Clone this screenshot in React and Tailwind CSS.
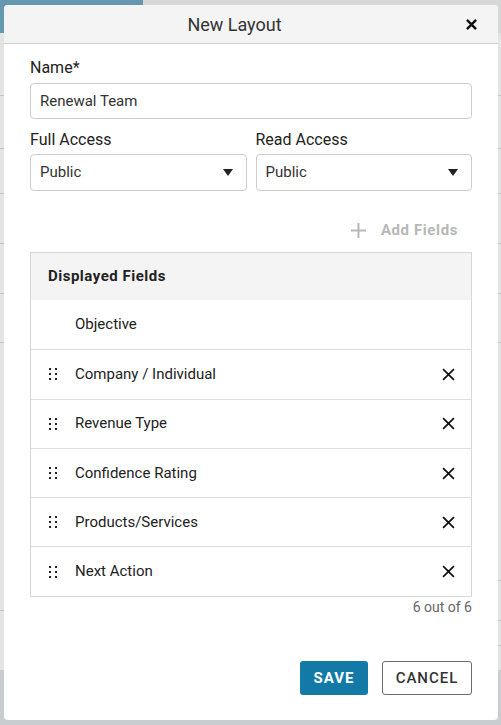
import React from "react";

function Handle() {
  return (
    <svg width="10" height="14" viewBox="0 0 10 14" className="shrink-0">
      {[0, 1].map((c) =>
        [0, 1, 2].map((r) => (
          <rect key={`${c}-${r}`} x={1 + c * 6} y={1 + r * 5} width="2" height="2" fill="#222" />
        ))
      )}
    </svg>
  );
}

function XIcon({ size = 12, stroke = 1.6 }) {
  return (
    <svg width={size} height={size} viewBox="0 0 12 12">
      <path d="M1 1L11 11M11 1L1 11" stroke="#111" strokeWidth={stroke} strokeLinecap="butt" />
    </svg>
  );
}

function Caret() {
  return (
    <svg width="10" height="7" viewBox="0 0 10 7">
      <path d="M0 0H10L5 7Z" fill="#222" />
    </svg>
  );
}

const rows = [
  { label: "Objective", fixed: true },
  { label: "Company / Individual" },
  { label: "Revenue Type" },
  { label: "Confidence Rating" },
  { label: "Products/Services" },
  { label: "Next Action" },
];

export default function App() {
  return (
    <div
      className="relative w-[501px] h-[725px] overflow-hidden bg-[#e3e4e4]"
      style={{ fontFamily: "Roboto, 'Liberation Sans', sans-serif" }}
    >
      {/* backdrop page */}
      <div className="absolute left-0 top-0 w-full h-[33px] bg-[#d6d7d7]" />
      <div className="absolute left-0 top-0 w-[143px] h-[33px] bg-[#6597b0]" />
      <div className="absolute left-0 top-[670px] w-full h-[55px] bg-[#c9cdd0]" />
      {[95, 148, 193, 243, 293, 342, 610].map((y) => (
        <div key={"l" + y} className="absolute left-0 w-[4px] h-px bg-[#c4c6c6]" style={{ top: y }} />
      ))}
      {[95, 148, 193, 243, 293, 342, 580, 620, 645].map((y) => (
        <div key={"r" + y} className="absolute right-0 w-[3px] h-px bg-[#c4c6c6]" style={{ top: y }} />
      ))}

      {/* modal */}
      <div className="absolute left-[4px] top-[5px] w-[494px] h-[715px] bg-white rounded-[4px] flex flex-col overflow-hidden">
        <div className="h-[38px] shrink-0 flex items-center bg-[#f4f4f4] border-b border-[#cfcfcf] box-content">
          <div className="flex-1 text-center text-[18px] text-[#333] pt-[1px]">New Layout</div>
          <button className="w-[12px] mr-[21px] flex items-center justify-center h-full">
            <XIcon size={11} stroke={2.6} />
          </button>
        </div>

        <div className="px-[26px] pt-[14px] flex flex-col">
          <label className="text-[16px] leading-[20px] text-[#222]">Name*</label>
          <div className="mt-[5px] h-[36px] border border-[#ccc] rounded-[4px] flex items-center px-[9px] text-[15px] text-[#333]">
            Renewal Team
          </div>

          <div className="mt-[11px] flex gap-[9px]">
            {["Full Access", "Read Access"].map((l) => (
              <div key={l} className="flex-1 flex flex-col">
                <label className="text-[16px] leading-[20px] text-[#222]">{l}</label>
                <div className="mt-[4px] h-[37px] border border-[#ccc] rounded-[4px] flex items-center justify-between pl-[9px] pr-[13px] text-[15px] text-[#333]">
                  <span>Public</span>
                  <Caret />
                </div>
              </div>
            ))}
          </div>

          <div className="mt-[29px] h-[20px] flex items-center justify-end pr-[14px] text-[15px] font-bold tracking-[0.6px] text-[#b8b8b8]">
            <svg width="15" height="15" viewBox="0 0 15 15" className="mr-[15px]">
              <path d="M7.5 0V15M0 7.5H15" stroke="#b8b8b8" strokeWidth="2" />
            </svg>
            <span>Add Fields</span>
          </div>

          <div className="mt-[12px] border border-[#d6d6d6]">
            <div className="h-[47px] bg-[#f4f4f4] flex items-center px-[17px] text-[15px] font-bold tracking-[0.5px] text-[#222]">
              Displayed Fields
            </div>
            {rows.map((r, i) => (
              <div
                key={r.label}
                className={`h-[49.3px] flex items-center pl-[17px] pr-[16px] text-[15px] text-[#222] ${
                  i > 0 ? "border-t border-[#dedede]" : ""
                }`}
              >
                <div className="w-[27px]">{!r.fixed && <Handle />}</div>
                <span className="flex-1">{r.label}</span>
                {!r.fixed && <XIcon size={13} stroke={1.6} />}
              </div>
            ))}
          </div>

          <div className="mt-[1px] text-right text-[14px] text-[#666] leading-[18px]">6 out of 6</div>

          <div className="mt-[45px] flex justify-end gap-[14px]">
            <button className="h-[34px] w-[68px] rounded-[3px] bg-[#137aa8] text-white text-[15px] font-bold tracking-[1px]">
              SAVE
            </button>
            <button className="h-[34px] w-[90px] rounded-[3px] border border-[#6b6b6b] bg-white text-[#333] text-[15px] font-medium tracking-[1px]">
              CANCEL
            </button>
          </div>
        </div>
      </div>
    </div>
  );
}
